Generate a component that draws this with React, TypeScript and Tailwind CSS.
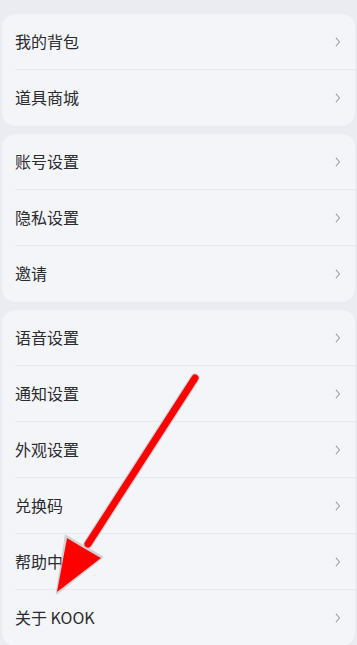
import React from 'react';

const groups: string[][] = [
  ['我的背包', '道具商城'],
  ['账号设置', '隐私设置', '邀请'],
  ['语音设置', '通知设置', '外观设置', '兑换码', '帮助中心', '关于 KOOK'],
];

const Chevron: React.FC = () => (
  <svg width="6" height="10" viewBox="0 0 6 10" fill="none" className="shrink-0">
    <path d="M1.2 1.2 L4.6 5 L1.2 8.8" stroke="#9a9ca3" strokeWidth="1.1" strokeLinecap="round" strokeLinejoin="round" />
  </svg>
);

const Row: React.FC<{ label: string; last: boolean }> = ({ label, last }) => (
  <div className="pl-[13px]">
    <div
      className={`h-14 flex items-center justify-between pr-[14px] ${
        last ? '' : 'border-b border-[#e7e9ef]'
      }`}
    >
      <span className="text-[16px] text-[#2a2b2e] leading-none -mt-[2px]">{label}</span>
      <Chevron />
    </div>
  </div>
);

const App: React.FC = () => {
  return (
    <div
      className="relative w-[357px] h-[645px] overflow-hidden bg-[#eaecf1] pt-[14px] px-[2px]"
      style={{ fontFamily: '"Noto Sans CJK SC", "Noto Sans", sans-serif' }}
    >
      <div className="flex flex-col gap-2">
        {groups.map((g, i) => (
          <div key={i} className="bg-[#f4f5f9] rounded-[14px]">
            {g.map((label, j) => (
              <Row key={label} label={label} last={j === g.length - 1} />
            ))}
          </div>
        ))}
      </div>

      <svg
        className="absolute left-0 top-0 pointer-events-none"
        width="357"
        height="645"
        viewBox="0 0 357 645"
      >
        <line x1="195" y1="378" x2="88" y2="544" stroke="#b4b5ba" strokeWidth="9.5" strokeLinecap="round" opacity="0.55" />
        <polygon points="57,593 66,536 81,545 102,557" fill="none" stroke="#b4b5ba" strokeWidth="2.5" strokeLinejoin="round" opacity="0.55" />
        <line x1="195" y1="378" x2="88" y2="544" stroke="#ff0000" strokeWidth="7" strokeLinecap="round" />
        <polygon points="57,592 67,538 82,547 101,558" fill="#ff0000" />
      </svg>
    </div>
  );
};

export default App;
